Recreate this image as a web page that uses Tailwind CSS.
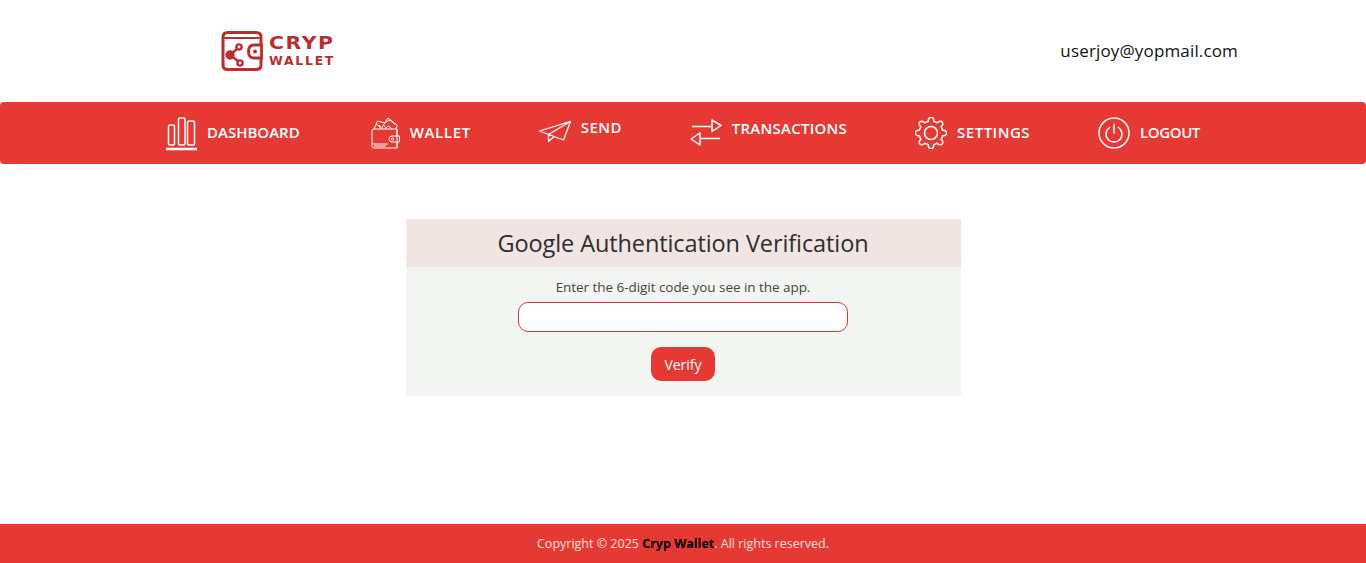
<!DOCTYPE html>
<html lang="en"><head><meta charset="utf-8"><title>Cryp Wallet</title>
<script src="https://cdn.jsdelivr.net/npm/@tailwindcss/browser@4"></script></head>
<body class="bg-white font-['Open_Sans',sans-serif]">
<div class="h-[563px] flex flex-col overflow-hidden">
<header class="h-[102px] shrink-0 flex items-center justify-between pl-[221px] pr-[128px]">
  <div class="flex items-center gap-[6px] text-[#b92f2f] pb-[1px]">
    <svg width="42" height="42" viewBox="0 0 42 42" fill="none" stroke="#b92f2f" stroke-width="3" stroke-linejoin="round" stroke-linecap="round">
      <path d="M40 15V7Q40 2.500 35 2.500H7Q2 2.500 2 7V35Q2 39.500 7 39.500H35Q40 39.500 40 35V28"/>
      <path d="M3 8H38" stroke-width="2"/>
      <path d="M40.500 15H33Q27.500 15 27.500 21.500Q27.500 28 33 28H40.500Z" stroke-width="2.800"/>
      <circle cx="34" cy="21.500" r="2" fill="#b92f2f" stroke="none"/>
      <circle cx="18" cy="17" r="2.600" stroke-width="2.400"/><circle cx="19" cy="33" r="2.600" stroke-width="2.400"/>
      <path d="M16 19L9 25L17 31" stroke-width="2.400"/><circle cx="9" cy="25" r="3.200" fill="#b92f2f"/>
    </svg>
    <div class="flex flex-col font-['DejaVu_Sans',sans-serif] font-bold">
      <span class="text-[17px] leading-[20px] tracking-[1.300px] scale-x-[1.2] origin-left">CRYP</span>
      <span class="text-[12.500px] leading-[15px] tracking-[1.700px]">WALLET</span>
    </div>
  </div>
  <span class="text-[17px] leading-6 font-medium text-[#111] tracking-[.15px]">userjoy@yopmail.com</span>
</header>
<nav class="h-[62px] shrink-0 bg-[#e73934] rounded-[4px] flex items-center justify-center gap-[68px] text-white font-semibold text-[15px] leading-5">
  <a class="flex items-center gap-[10px] mr-[3px]">
    <svg width="31" height="35" viewBox="0 0 31 35" fill="none" stroke="#fff" stroke-width="1.500"><rect x="2.500" y="9" width="6" height="20" rx="1.500"/><rect x="12.500" y="2" width="6.500" height="27" rx="1.500"/><rect x="21.500" y="5" width="7" height="24" rx="1.500"/><path stroke-width="2.500" d="M0 33H31"/></svg>
    <span class="pb-[2px]">DASHBOARD</span>
  </a>
  <a class="flex items-center gap-[10px]">
    <svg width="29" height="32" viewBox="0 0 29 32" fill="none" stroke="#fff" stroke-width="1" stroke-linejoin="round"><path d="M1 14Q1 12 3 12H26V31H3Q1 31 1 29ZM21 19H28.500V25H21Q18 25 18 22Q18 19 21 19ZM26 12V19M26 25V31"/><path d="M3 12L6.500 4L14 6M5 7.500L10 9.500M8 9L10 12M10 12L17 1L26.500 8.500L24.500 12M14 12Q17 6.500 21 12M15 5L19 3L24 7.500M12.500 8.500L14.500 10"/><path d="M1 27H17M3 29H15"/><circle cx="21.500" cy="22" r="1.200"/></svg>
    <span class="pb-[3px] tracking-[.65px]">WALLET</span>
  </a>
  <a class="flex items-center gap-[10px] pb-[4px]">
    <svg width="32" height="21" viewBox="0 0 32 21" fill="none" stroke="#fff" stroke-width="1.300" stroke-linejoin="round"><path d="M0.500 10L31.500 0.500L24.500 19L15 15.500ZM31.500 0.500L9.500 13.500V20.500L15 15.500"/></svg>
    <span class="pb-[8px] tracking-[.4px]">SEND</span>
  </a>
  <a class="flex items-center gap-[10px] pb-[1px]">
    <svg width="32" height="27" viewBox="0 0 32 27" fill="none" stroke="#fff" stroke-width="1.500" stroke-linejoin="round"><path d="M2 7.500H22M22 1L31 6.500L22 12.500ZM10 19.500H30M10 14L1 20L10 26Z"/></svg>
    <span class="pb-[9px] tracking-[.25px]">TRANSACTIONS</span>
  </a>
  <a class="flex items-center gap-[10px]">
    <svg width="32" height="32" viewBox="0 0 32 32" fill="none" stroke="#fff" stroke-width="1.500" stroke-linejoin="round"><circle cx="16" cy="16" r="6.500"/><path d="M13.300 4.300C12.800 -1 19.200 -1 18.700 4.300L22.360 5.820C25.760 1.720 30.280 6.240 26.180 9.640L27.700 13.300C33 12.800 33 19.200 27.700 18.700L26.180 22.360C30.280 25.760 25.760 30.280 22.360 26.180L18.700 27.700C19.200 33 12.800 33 13.300 27.700L9.640 26.180C6.240 30.280 1.720 25.760 5.820 22.360L4.300 18.700C-1 19.200 -1 12.800 4.300 13.300L5.820 9.640C1.720 6.240 6.240 1.720 9.640 5.820Z"/></svg>
    <span class="pb-[2px] tracking-[.5px]">SETTINGS</span>
  </a>
  <a class="flex items-center gap-[10px]">
    <svg width="32" height="32" viewBox="0 0 32 32" fill="none" stroke="#fff" stroke-width="1.500" stroke-linecap="round"><circle cx="16" cy="16" r="15"/><path d="M11.500 10.500A8 8 0 1 0 20.500 10.500M16 7V16"/></svg>
    <span class="pb-[2px] tracking-[-.4px]">LOGOUT</span>
  </a>
</nav>
<main class="flex-1 flex justify-center pt-[55px]">
  <section class="w-[555px] h-[177px] bg-[#f3f5f3] text-center">
    <h1 class="h-[48px] bg-[#f1e5e3] text-[23.500px] tracking-[-.1px] leading-[49px] font-normal text-[#2d2d2d]">Google Authentication Verification</h1>
    <form class="flex flex-col items-center pt-[11px]">
      <label class="text-[13.500px] tracking-[-.05px] leading-[18px] text-[#444]">Enter the 6-digit code you see in the app.</label>
      <input type="text" class="mt-[6px] w-[330px] h-[30px] bg-white border border-[#d93636] rounded-[10px]">
      <button type="button" class="mt-[15px] w-[64px] h-[34px] bg-[#e73934] text-white text-[14px] rounded-[10px]">Verify</button>
    </form>
  </section>
</main>
<footer class="h-[39px] shrink-0 bg-[#e73934] flex items-center justify-center pt-[1px] text-[12.500px] text-[#f8e0de]">
  <p>Copyright © 2025 <b class="text-black font-bold">Cryp Wallet</b>. All rights reserved.</p>
</footer>
</div>
</body></html>
